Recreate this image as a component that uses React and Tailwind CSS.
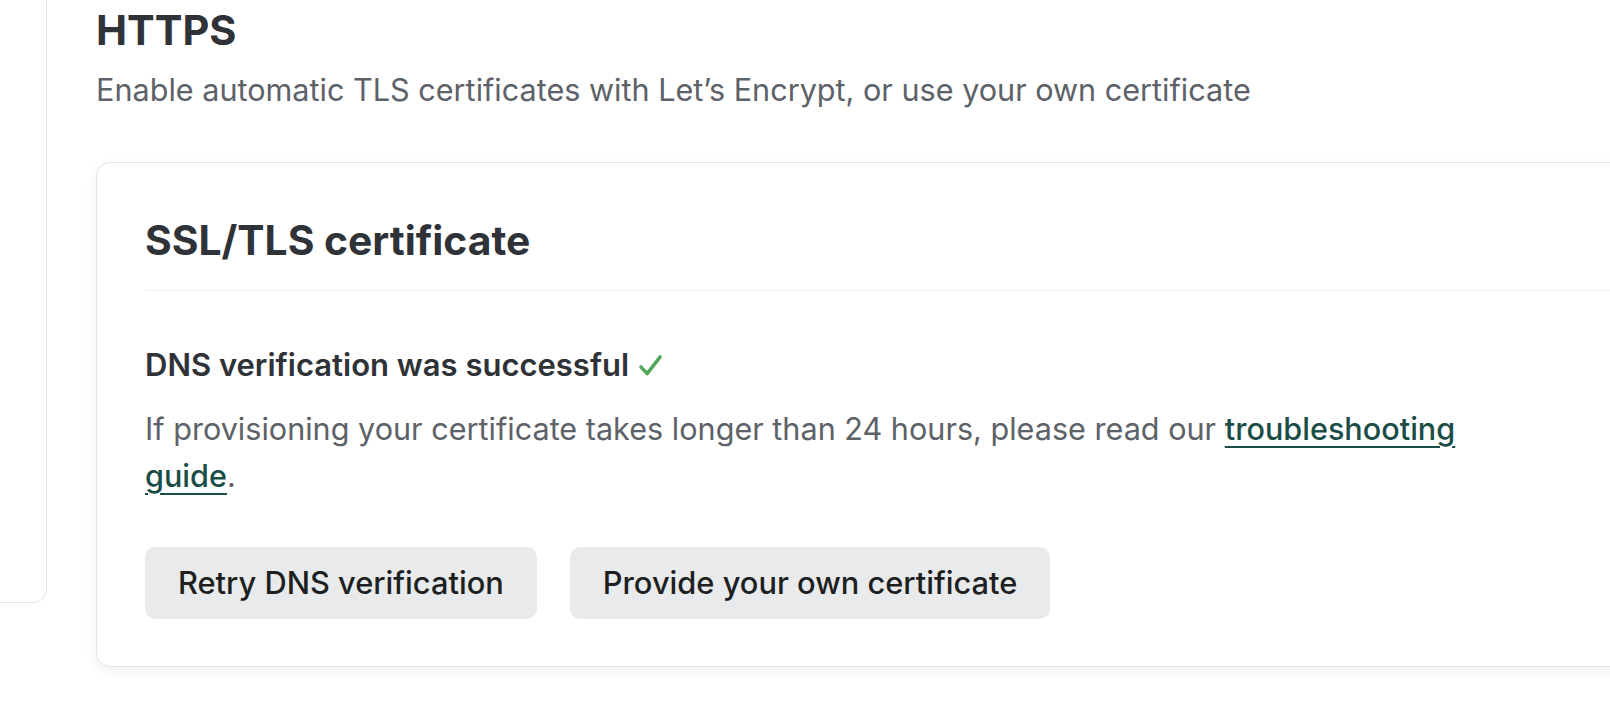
import React from 'react';

const font = "font-['Inter','Noto_Sans',sans-serif]";

const Check = () => (
  <svg viewBox="0 0 28 26" className="ml-[8px] inline-block h-[25px] w-[27px] align-[-2px]" fill="none">
    <path d="M4 14.5 L10.5 21.5 L24 4" stroke="#4fa85a" strokeWidth="3.6" strokeLinecap="round" strokeLinejoin="round" />
  </svg>
);

const App = () => {
  return (
    <div className={`flex h-[724px] w-full overflow-hidden bg-white ${font}`}>
      {/* sidebar edge */}
      <div className="h-[603px] w-[47px] shrink-0 rounded-br-[14px] border-r border-b border-[#e3e4e6] bg-white" />

      <main className="ml-[49px] w-[1600px] shrink-0 pt-[6px]">
        <h1 className="text-[41.5px] leading-[48px] font-bold text-[#2f3237]">HTTPS</h1>
        <p className="mt-[16px] text-[30.6px] leading-[40px] text-[#5d6168]">
          Enable automatic TLS certificates with Let’s Encrypt, or use your own certificate
        </p>

        {/* certificate card */}
        <section className="mt-[52px] rounded-[14px] border border-[#e4e5e7] bg-white px-[48px] pt-[53px] pb-[47px] shadow-[0_4px_14px_rgba(0,0,0,0.06)]">
          <h2 className="text-[40.8px] leading-[48px] font-bold text-[#2f3237]">SSL/TLS certificate</h2>
          <hr className="mt-[26px] border-t border-[#eeeff0]" />

          <h3 className="mt-[55px] text-[31px] leading-[38px] font-semibold text-[#2f3237]">
            DNS verification was successful
            <Check />
          </h3>
          <p className="mt-[21px] max-w-[1390px] text-[30.6px] leading-[47px] text-[#5d6168]">
            If provisioning your certificate takes longer than 24 hours, please read our{' '}
            <a href="#" className="font-medium text-[#1b4d47] underline underline-offset-[6px] decoration-2">
              troubleshooting guide
            </a>
            .
          </p>

          <div className="mt-[48px] flex gap-[33px]">
            <button className="h-[72px] rounded-[10px] bg-[#e9eaec] px-[33px] text-[30.8px] font-medium text-[#1e1f21]">
              Retry DNS verification
            </button>
            <button className="h-[72px] rounded-[10px] bg-[#e9eaec] px-[33px] text-[30.8px] font-medium text-[#1e1f21]">
              Provide your own certificate
            </button>
          </div>
        </section>
      </main>
    </div>
  );
};

export default App;
